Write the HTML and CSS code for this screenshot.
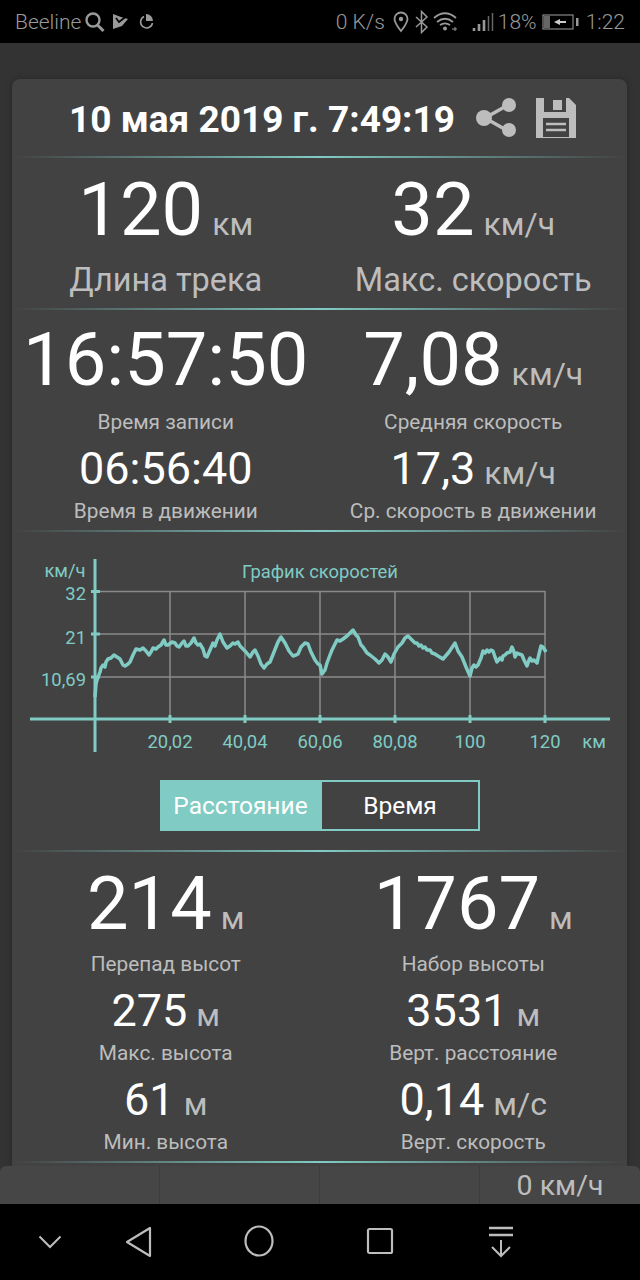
FILE: index.html
```html
<!DOCTYPE html>
<html>
<head>
    <title>Track statistics</title>
    <link rel="stylesheet" href="styles.css">
</head>
<body>
    <div class="statusbar">
        <div class="status-left">
            <span class="carrier">Beeline</span>
            <svg class="st-search" width="22" height="24" viewBox="0 0 22 24"><circle cx="9" cy="10" r="6.5" fill="none" stroke="#999" stroke-width="2.4"/><path d="M13.5 15l6 6" stroke="#999" stroke-width="3"/></svg>
            <svg class="st-play" width="16" height="15" viewBox="0 0 16 15"><path d="M0 0l8 3 7 2-6 7-9 3z" fill="#999"/><path d="M3 4l3 4 9-7" fill="none" stroke="#000" stroke-width="1.600"/></svg>
            <svg class="st-pie" width="17" height="17" viewBox="0 0 17 17"><path d="M6 3.500A6 6 0 1 0 14.500 10" fill="none" stroke="#999" stroke-width="1.600"/><path d="M8 1a7 7 0 0 1 7 7H8z" fill="#999"/></svg>
        </div>
        <div class="status-right">
            <span class="speed">0 K/s</span>
            <svg class="st-pin" width="16" height="22" viewBox="0 0 16 22"><path d="M8 20C4 15 1.500 11.500 1.500 8a6.500 6.500 0 0 1 13 0c0 3.500-2.500 7-6.500 12z" fill="none" stroke="#999" stroke-width="1.800"/><circle cx="8" cy="8" r="2.200" fill="#999"/></svg>
            <svg class="st-bt" width="14" height="24" viewBox="0 0 14 24"><path d="M1 7l11 10-5.500 5.500V1.500L12 7 1 17" fill="none" stroke="#999" stroke-width="1.500"/></svg>
            <svg class="st-wifi" width="25" height="20" viewBox="0 0 25 20"><path d="M1 6c7-6 15-6 22 0M4 10c5-4 11-4 16 0M7 13c3-2 7-2 10 0" fill="none" stroke="#999" stroke-width="1.800"/><circle cx="12" cy="16.500" r="2" fill="#999"/><path d="M19 17h5M22 15v4" stroke="#999" stroke-width="1"/></svg>
            <svg class="st-signal" width="22" height="22" viewBox="0 0 22 22"><path d="M2 17v3M7 13v7M12 9v11" stroke="#999" stroke-width="2.600"/><path d="M16.500 5v15M20.500 2v18" stroke="#666" stroke-width="1.500"/></svg>
            <span class="percent">18%</span>
            <svg class="st-battery" width="37" height="18" viewBox="0 0 37 18"><rect x="1" y="2" width="30" height="14" fill="none" stroke="#888" stroke-width="1.200"/><rect x="2" y="3" width="6" height="12" fill="#666"/><path d="M12 9l6-3v2h6v2h-6v2z" fill="#ccc"/><rect x="34" y="5" width="2.500" height="8" fill="#999"/></svg>
            <span class="clock">1:22</span>
        </div>
    </div>

    <div class="content">
        <div class="card">
            <div class="card-head">
                <span class="head-date">10 мая 2019 г. 7:49:19</span>
                <svg class="head-icon" width="44" height="44" viewBox="0 0 44 44"><path d="M33 9L10 22l23 13" fill="none" stroke="#bdbdbd" stroke-width="3.500"/><circle cx="34" cy="9" r="7" fill="#bdbdbd"/><circle cx="9" cy="22" r="8" fill="#bdbdbd"/><circle cx="34" cy="34" r="7" fill="#bdbdbd"/></svg>
                <svg class="head-icon" width="42" height="42" viewBox="0 0 42 42"><path d="M1 1h33l7 7v33H1z" fill="#bdbdbd"/><path d="M9 1h22v14H9z" fill="#424242"/><rect x="18" y="3" width="9" height="10" fill="#bdbdbd"/><rect x="8" y="21" width="26" height="19" fill="#424242"/><path d="M11 27h20M11 33h20" stroke="#bdbdbd" stroke-width="2.500"/></svg>
            </div>
            <div class="line"></div>

            <div class="stats stats-one">
                <div class="cell"><div class="val big">120<span class="unit">км</span></div><div class="label label-big">Длина трека</div></div>
                <div class="cell"><div class="val big">32<span class="unit">км/ч</span></div><div class="label label-big">Макс. скорость</div></div>
            </div>
            <div class="line"></div>

            <div class="stats stats-two">
                <div class="cell"><div class="val big">16:57:50</div><div class="label">Время записи</div></div>
                <div class="cell"><div class="val big">7,08<span class="unit">км/ч</span></div><div class="label">Средняя скорость</div></div>
                <div class="cell"><div class="val mid">06:56:40</div><div class="label">Время в движении</div></div>
                <div class="cell"><div class="val mid">17,3<span class="unit">км/ч</span></div><div class="label">Ср. скорость в движении</div></div>
            </div>
            <div class="line"></div>

            <svg class="chart" width="615" height="240" viewBox="12 532 615 240">
                <g class="grid">
                    <path d="M95 591.500H545M95 634H545M95 677H545"/>
                    <path d="M170 591V719M245 591V719M320 591V719M395 591V719M470 591V719M545 591V719"/>
                </g>
                <path class="axis" d="M30 719H610M95 559V752"/>
                <path class="ticks" d="M91 591.500H100M91 634H100M91 677H100M170 715V723M245 715V723M320 715V723M395 715V723M470 715V723M545 715V723"/>
                <polyline class="curve" points="95,697 96,684 97,680 100,672 101,668 103,665 105,667 106,662 108,659 111,658 114,655 117,657 120,659 123,665 125,666 128,664 130,662 133,655 136,649 140,650 143,648 146,651 149,655 151,652 153,648 156,649 158,647 161,645 164,640 166,645 168,645 172,642 175,643 177,646 179,647 182,643 184,641 186,646 188,646 191,643 194,638 196,643 198,645 200,644 203,649 205,656 207,657 210,650 213,643 215,646 217,640 220,634 223,642 227,648 230,646 233,643 235,644 238,642 240,646 242,648 246,652 250,657 253,652 255,650 258,656 261,664 264,668 267,664 270,662 274,652 278,642 281,637 285,643 289,651 293,656 296,655 298,654 301,647 305,643 308,644 311,652 315,660 318,664 320,665 322,674 325,670 327,663 330,655 332,650 335,644 337,640 340,641 343,639 347,636 350,633 353,630 356,635 358,637 361,645 363,647 367,653 370,655 375,659 379,663 382,660 385,654 388,657 391,662 394,654 398,647 402,643 405,638 408,636 412,640 415,643 417,643 419,646 421,645 423,648 425,647 427,650 430,650 432,653 435,654 438,656 443,659 449,652 455,643 458,651 462,657 466,667 470,676 472,668 474,665 476,667 478,665 481,658 483,651 485,653 487,650 489,652 491,650 493,651 495,657 497,662 500,658 502,660 503,656 505,655 507,653 510,652 512,647 514,652 515,657 517,653 519,654 522,655 524,660 527,666 529,660 530,658 532,661 534,660 537,663 539,654 541,646 543,647 546,652"/>
                <g class="chart-text">
                    <text x="65" y="577" text-anchor="middle">км/ч</text>
                    <text x="320" y="578" text-anchor="middle">График скоростей</text>
                    <text x="86" y="600" text-anchor="end">32</text>
                    <text x="86" y="644" text-anchor="end">21</text>
                    <text x="86" y="686" text-anchor="end">10,69</text>
                    <text x="170" y="748" text-anchor="middle">20,02</text>
                    <text x="245" y="748" text-anchor="middle">40,04</text>
                    <text x="320" y="748" text-anchor="middle">60,06</text>
                    <text x="395" y="748" text-anchor="middle">80,08</text>
                    <text x="470" y="748" text-anchor="middle">100</text>
                    <text x="545" y="748" text-anchor="middle">120</text>
                    <text x="594" y="748" text-anchor="middle">км</text>
                </g>
            </svg>

            <div class="toggle">
                <div class="toggle-btn active">Расстояние</div>
                <div class="toggle-btn">Время</div>
            </div>
            <div class="line"></div>

            <div class="stats stats-three">
                <div class="cell"><div class="val big">214<span class="unit">м</span></div><div class="label">Перепад высот</div></div>
                <div class="cell"><div class="val big">1767<span class="unit">м</span></div><div class="label">Набор высоты</div></div>
                <div class="cell"><div class="val mid">275<span class="unit">м</span></div><div class="label">Макс. высота</div></div>
                <div class="cell"><div class="val mid">3531<span class="unit">м</span></div><div class="label">Верт. расстояние</div></div>
                <div class="cell"><div class="val mid">61<span class="unit">м</span></div><div class="label">Мин. высота</div></div>
                <div class="cell"><div class="val mid">0,14<span class="unit">м/с</span></div><div class="label">Верт. скорость</div></div>
            </div>
            <div class="line"></div>
        </div>

        <div class="strip">
            <div class="strip-cell"></div>
            <div class="strip-cell"></div>
            <div class="strip-cell"></div>
            <div class="strip-cell strip-speed">0 км/ч</div>
        </div>
    </div>

    <div class="navbar">
        <svg class="nav-down" width="24" height="14" viewBox="0 0 24 14"><path d="M1.500 1.500L12 12 22.500 1.500" fill="none" stroke="#bdbdbd" stroke-width="2"/></svg>
        <svg class="nav-back" width="28" height="32" viewBox="0 0 28 32"><path d="M25 2v28L2 16z" fill="none" stroke="#bdbdbd" stroke-width="2.200" stroke-linejoin="round"/></svg>
        <svg class="nav-home" width="30" height="32" viewBox="0 0 30 32"><ellipse cx="15" cy="16" rx="13.500" ry="14.500" fill="none" stroke="#bdbdbd" stroke-width="2.200"/></svg>
        <svg class="nav-recent" width="28" height="28" viewBox="0 0 28 28"><rect x="2" y="2" width="24" height="24" rx="1.500" fill="none" stroke="#bdbdbd" stroke-width="2.200"/></svg>
        <svg class="nav-drop" width="26" height="32" viewBox="0 0 26 32"><path d="M1 2h24M1 9h24" stroke="#bdbdbd" stroke-width="2.400"/><path d="M13 14v16M4 21l9 9 9-9" fill="none" stroke="#bdbdbd" stroke-width="2"/></svg>
    </div>
</body>
</html>
```

FILE: styles.css
```css
* { box-sizing: border-box; }
html, body { margin: 0; padding: 0; }
body {
    width: 640px;
    height: 1280px;
    overflow: hidden;
    display: flex;
    flex-direction: column;
    background: #000;
    font-family: Roboto, "Noto Sans", sans-serif;
    color: #fff;
}

.statusbar {
    height: 43px;
    flex: none;
    padding: 0 15px 0 15px;
    display: flex;
    justify-content: space-between;
    align-items: center;
    background: #000;
    color: #999;
    font-size: 21px;
    font-weight: 300;
}
.status-left, .status-right { display: flex; align-items: center; }
.st-search { margin-left: 3px; }
.st-play { margin-left: 7px; }
.st-pie { margin-left: 9px; }
.st-pin { margin-left: 8px; }
.st-bt { margin-left: 6px; }
.st-wifi { margin-left: 4px; }
.st-signal { margin-left: 14px; }
.percent { margin-left: 4px; }
.st-battery { margin-left: 5px; }
.clock { margin-left: 7px; }

.content {
    flex: 1;
    display: flex;
    flex-direction: column;
    background: #333;
    padding-top: 36px;
}
.card {
    margin: 0 13px 0 12px;
    height: 1087px;
    background: #424242;
    border-radius: 8px 8px 0 0;
    box-shadow: 0 0 6px rgba(0, 0, 0, 0.25);
}
.card-head {
    height: 77px;
    padding-left: 57px;
    display: flex;
    align-items: center;
}
.head-date {
    font-size: 37px;
    font-weight: 700;
    width: 406px;
    padding-top: 3px;
}
.head-icon { margin-right: 16px; flex: none; }

.line {
    height: 2px;
    background: linear-gradient(to right, rgba(128, 203, 196, 0), #80cbc4 50%, rgba(128, 203, 196, 0));
}

.stats {
    display: grid;
    grid-template-columns: 1fr 1fr;
}
.stats-one { height: 150px; padding-top: 10px; }
.stats-two { height: 220px; padding-top: 2px; }
.stats-three { height: 309px; padding-top: 6px; }
.cell { text-align: center; white-space: nowrap; }
.val { font-weight: 400; }
.big { font-size: 74px; line-height: 84px; }
.stats-two .big { line-height: 96px; }
.stats-three .big { line-height: 92px; }
.mid { font-size: 45px; line-height: 56px; }
.unit {
    font-size: 32px;
    line-height: 1;
    color: #bdbdbd;
    margin-left: 9px;
}
.label {
    font-size: 20.800px;
    line-height: 28px;
    color: #bdbdbd;
}
.label-big {
    font-size: 32.500px;
    line-height: 56px;
}

.chart { display: block; }
.grid path { fill: none; stroke: #8a8a8a; stroke-width: 1.500; }
.axis { fill: none; stroke: #80cbc4; stroke-width: 3; }
.ticks { fill: none; stroke: #80cbc4; stroke-width: 3; }
.curve { fill: none; stroke: #80cbc4; stroke-width: 3.500; stroke-linejoin: round; }
.chart-text text { fill: #80cbc4; font-size: 18.400px; }

.toggle {
    width: 320px;
    height: 51px;
    margin: 8px 0 19px 148px;
    border: 2px solid #80cbc4;
    display: flex;
}
.toggle-btn {
    flex: 1;
    display: flex;
    align-items: center;
    justify-content: center;
    font-size: 24.500px;
}
.toggle-btn.active {
    flex: none;
    width: 160px;
    padding-right: 3px;
    background: #80cbc4;
}

.strip {
    height: 38px;
    display: flex;
    background: #464646;
    border-radius: 6px 6px 0 0;
}
.strip-cell {
    width: 160px;
    border-right: 1px solid #3c3c3c;
}
.strip-cell:last-child { border-right: 0; }
.strip-speed {
    font-size: 28.500px;
    line-height: 40px;
    color: #bdbdbd;
    text-align: center;
}

.navbar {
    height: 76px;
    flex: none;
    position: relative;
    background: #000;
}
.navbar svg { position: absolute; }
.nav-down { left: 38px; top: 31px; }
.nav-back { left: 125px; top: 22px; }
.nav-home { left: 244px; top: 21px; }
.nav-recent { left: 366px; top: 23px; }
.nav-drop { left: 488px; top: 22px; }
```
